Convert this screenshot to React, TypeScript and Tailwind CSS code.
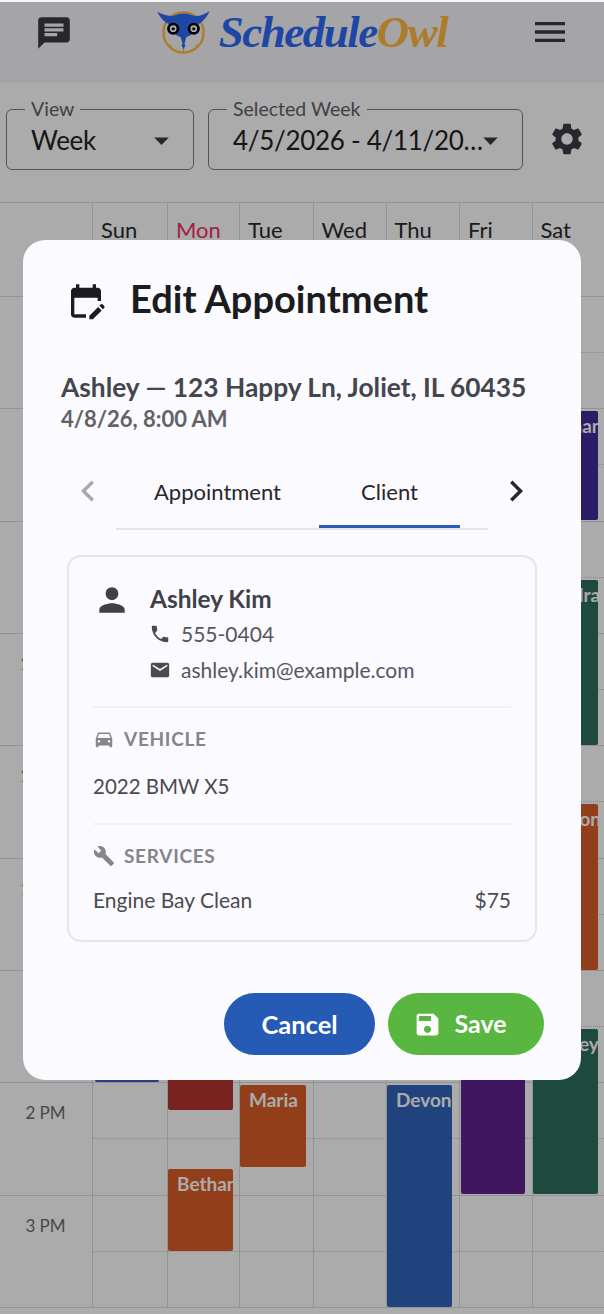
import type { JSX, ReactNode } from "react";

import {
    MdArrowDropDown,
    MdBuild,
    MdChat,
    MdChevronLeft,
    MdChevronRight,
    MdDirectionsCar,
    MdEditCalendar,
    MdEmail,
    MdMenu,
    MdPerson,
    MdPhone,
    MdSave,
    MdSettings,
} from "react-icons/md";

const days = ["Sun", "Mon", "Tue", "Wed", "Thu", "Fri", "Sat"];
const hours = ["7 AM", "8 AM", "9 AM", "10 AM", "11 AM", "12 PM", "1 PM", "2 PM", "3 PM"];

// class strings are spelled out per event, the calendar is dimmed by the backdrop
const events = [
    { name: "", cls: "left-[95px] top-[1040px] w-[64px] h-[42px] bg-[#3063bb]" },
    { name: "", cls: "left-[168px] top-[1040px] w-[65px] h-[70px] bg-[#b33430]" },
    { name: "Bethany", cls: "left-[168px] top-[1169px] w-[65px] h-[82px] bg-[#da5d27]" },
    { name: "Maria", cls: "left-[240px] top-[1085px] w-[66px] h-[82px] bg-[#da5d27]" },
    { name: "Devon", cls: "left-[387px] top-[1085px] w-[65px] h-[222px] bg-[#3063bb]" },
    { name: "", cls: "left-[461px] top-[1040px] w-[64px] h-[154px] bg-[#5e218e]" },
    { name: "Bethany", cls: "left-[533px] top-[411px] w-[65px] h-[109px] bg-[#422a9b]" },
    { name: "Sandra", cls: "left-[533px] top-[580px] w-[65px] h-[165px] bg-[#2e6e5e]" },
    { name: "Sharon", cls: "left-[533px] top-[804px] w-[65px] h-[166px] bg-[#da5d27]" },
    { name: "Ashley", cls: "left-[533px] top-[1029px] w-[65px] h-[165px] bg-[#2e6e5e]" },
];

function OwlLogo(): JSX.Element {
    return (
        <svg width="55" height="44" viewBox="0 0 58 47" aria-hidden="true">
            <circle cx="29" cy="24" r="21.5" fill="none" stroke="#ffba43" strokeWidth="2.5" />
            <path d="M29 41v4M7 25h3M48 25h3M14 39l2-2M44 39l-2-2" stroke="#ffba43" strokeWidth="1.5" />
            <path
                d="M1 2 C8 6 14 7 19 6 C25 3 33 3 39 6 C44 7 50 6 57 1 C54 8 49 13 45 15 C44 22 38 27 32 29 L30 36 L31 38 L29 42 L27 38 L28 36 L26 29 C20 27 14 22 13 15 C8 13 4 8 1 2 Z"
                fill="#2d6bf6"
            />
            <circle cx="18" cy="20" r="6.5" fill="#000" />
            <circle cx="40" cy="20" r="6.5" fill="#000" />
            <circle cx="18" cy="20" r="3.6" fill="#fff" />
            <circle cx="40" cy="20" r="3.6" fill="#fff" />
            <circle cx="18" cy="20" r="1.7" fill="#000" />
            <circle cx="40" cy="20" r="1.7" fill="#000" />
        </svg>
    );
}

function SelectField({ label, value, className }: { label: string; value: string; className: string }): JSX.Element {
    return (
        <fieldset className={`h-[67px] min-w-0 shrink-0 rounded-[6px] border border-[#7d7d87] pl-[24px] pr-[14px] ${className}`}>
            <legend className="ml-[-6px] px-[6px] text-[19.5px] leading-[12px] text-[#60626a]">{label}</legend>
            <div className="flex items-center pt-[7px]">
                <span className="min-w-0 flex-1 truncate text-[26px] leading-[36px] tracking-[-0.3px] text-[#222226]">{value}</span>
                <MdArrowDropDown className="ml-[-14px] shrink-0 text-[#3a3c44]" size={35} />
            </div>
        </fieldset>
    );
}

function SectionLabel({ icon, children }: { icon: ReactNode; children: string }): JSX.Element {
    return (
        <div className="flex h-[24px] items-center gap-[9px] text-[#85858a]">
            {icon}
            <span className="text-[19px] font-bold tracking-[0.7px]">{children}</span>
        </div>
    );
}

export default function App(): JSX.Element {
    return (
        <div className="relative h-[1314px] w-[604px] overflow-hidden bg-white font-['Lato','Noto_Sans',sans-serif]">
            {/* Page under the backdrop */}
            <div className="flex h-[83px] items-center justify-between bg-[#f6f6f9] pl-[35px] pr-[34px]">
                <MdChat size={38} className="mt-[-18px] text-[#3a3c44]" />
                <div className="mb-[19px] flex items-center gap-[8px]">
                    <OwlLogo />
                    <span className="font-['Liberation_Serif',serif] text-[45px] leading-[44px] font-bold tracking-[-1.5px] italic">
                        <span className="text-[#2d6bf6]">Schedule</span>
                        <span className="text-[#ffba43]">Owl</span>
                    </span>
                </div>
                <MdMenu size={40} className="mt-[-19px] text-[#3a3c44]" />
            </div>
            <div className="flex h-[119px] items-start bg-white pl-[6px] pt-[20px]">
                <SelectField label="View" value="Week" className="w-[188px]" />
                <SelectField label="Selected Week" value="4/5/2026 - 4/11/2026" className="ml-[14px] w-[315px]" />
                <MdSettings size={38} className="ml-[25px] mt-[17px] shrink-0 text-[#3a3c44]" />
            </div>
            <div className="border-t border-[#dcdcdc] bg-white">
                <div className="grid h-[94px] grid-cols-[92px_75px_72px_73.5px_73px_73.5px_72.5px_72px] border-b border-[#dcdcdc]">
                    <div />
                    {days.map((day) => (
                        <div
                            key={day}
                            className={`border-l border-[#dcdcdc] pl-[8px] pt-[11px] text-[22px] leading-[32px] ${
                                day === "Mon" ? "text-[#f52d68]" : "text-[#2a2a2c]"
                            }`}
                        >
                            {day}
                        </div>
                    ))}
                </div>
                {hours.map((hour) => (
                    <div
                        key={hour}
                        className="grid h-[112.35px] grid-cols-[92px_75px_72px_73.5px_73px_73.5px_72.5px_72px] border-b border-[#dcdcdc]"
                    >
                        <div className="pt-[17px] pr-[1px] text-center text-[17px] text-[#6c6c6e]">{hour}</div>
                        {days.map((day) => (
                            <div key={day} className="border-l border-[#dcdcdc]">
                                <div className="h-[56px] border-b border-dotted border-[#d0d0d0]" />
                            </div>
                        ))}
                    </div>
                ))}
            </div>
            {events.map((event, index) => (
                <div key={index} className={`absolute overflow-hidden rounded-[2px] pl-[9px] pt-[2px] ${event.cls}`}>
                    <span className="text-[19px] leading-[26px] font-bold whitespace-nowrap text-white">{event.name}</span>
                </div>
            ))}

            {/* Backdrop */}
            <div className="absolute inset-x-0 top-[2px] bottom-0 bg-black/33" />

            {/* Dialog */}
            <div className="absolute top-[240px] left-[23px] flex h-[840px] w-[558px] flex-col rounded-[22px] bg-[#fafaff]">
                <div className="flex h-[120px] items-center pl-[43px]">
                    <MdEditCalendar size={40} className="mt-[2px] text-[#1b1c20]" />
                    <h2 className="ml-[24px] mt-[-3px] text-[38px] font-bold text-[#1b1c20]">Edit Appointment</h2>
                </div>
                <div className="pl-[38px] pt-[9px]">
                    <div className="text-[26.3px] leading-[36px] font-bold text-[#44464d]">
                        Ashley — 123 Happy Ln, Joliet, IL 60435
                    </div>
                    <div className="text-[22px] leading-[28px] font-bold text-[#626266]">4/8/26, 8:00 AM</div>
                </div>
                <div className="mt-[29px] flex h-[93px] items-start">
                    <MdChevronLeft size={42} className="ml-[44px] mt-[8px] text-[#a8a8ac]" />
                    <div className="ml-[7px] flex h-[68px] w-[372px] border-b-2 border-[#e4e4ea] text-[22px] text-[#26272b]">
                        <div className="flex h-[66px] w-[203px] items-center justify-center pb-[7px]">Appointment</div>
                        <div className="flex h-[66px] w-[141px] items-center justify-center border-b-[3px] border-[#2a5db8] pb-[4px]">
                            Client
                        </div>
                    </div>
                    <MdChevronRight size={42} className="ml-[7px] mt-[8px] text-[#26272b]" />
                </div>
                <div className="mx-[44px] flex h-[387px] flex-col rounded-[14px] border-2 border-[#e6e6ea] px-[24px] pt-[26px]">
                    <div className="flex">
                        <MdPerson size={38} className="mt-[-2px] text-[#3f4148]" />
                        <div className="ml-[19px]">
                            <div className="text-[24.4px] leading-[32px] font-bold text-[#3f4148]">Ashley Kim</div>
                            <div className="mt-[1px] flex h-[36px] items-center gap-[10px] text-[21px] text-[#55565c]">
                                <MdPhone size={22} className="ml-[-1px] text-[#4a4b50]" />
                                555-0404
                            </div>
                            <div className="flex h-[36px] items-center gap-[10px] text-[21px] text-[#55565c]">
                                <MdEmail size={22} className="ml-[-1px] text-[#4a4b50]" />
                                ashley.kim@example.com
                            </div>
                        </div>
                    </div>
                    <div className="mt-[18px] h-[2px] bg-[#f1f1f5]" />
                    <div className="mt-[19px]">
                        <SectionLabel icon={<MdDirectionsCar size={22} />}>VEHICLE</SectionLabel>
                    </div>
                    <div className="mt-[21px] text-[20.5px] leading-[28px] text-[#4a4b50]">2022 BMW X5</div>
                    <div className="mt-[23px] h-[2px] bg-[#f1f1f5]" />
                    <div className="mt-[19px]">
                        <SectionLabel icon={<MdBuild size={22} />}>SERVICES</SectionLabel>
                    </div>
                    <div className="mt-[18px] flex justify-between text-[21px] leading-[28px] text-[#4a4b50]">
                        <span>Engine Bay Clean</span>
                        <span>$75</span>
                    </div>
                </div>
                <div className="mt-[51px] flex justify-end gap-[13px] pr-[37px]">
                    <button className="h-[62px] w-[151px] rounded-full bg-[#255bb5] text-[25.5px] font-bold text-white">
                        Cancel
                    </button>
                    <button className="flex h-[62px] w-[156px] items-center justify-center gap-[12px] rounded-full bg-[#58b641] pr-[12px] text-[25px] font-bold text-white">
                        <MdSave size={29} />
                        Save
                    </button>
                </div>
            </div>
        </div>
    );
}
